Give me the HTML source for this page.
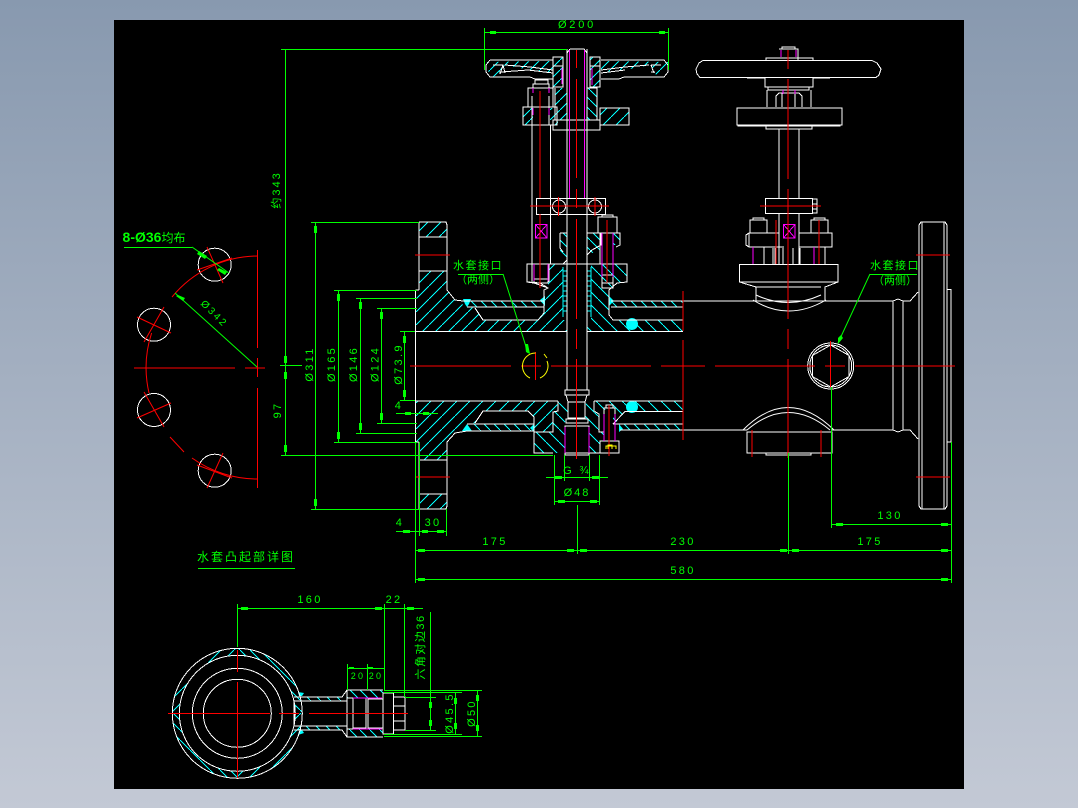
<!DOCTYPE html>
<html><head><meta charset="utf-8"><title>CAD drawing</title>
<style>
html,body{margin:0;padding:0;width:1078px;height:808px;overflow:hidden;background:linear-gradient(#8899af,#c3c9d5)}
svg{position:absolute;left:0;top:0}
.b{fill:none;stroke:#fff;stroke-width:1}
.r{fill:none;stroke:#f00;stroke-width:1}
.g{fill:none;stroke:#0f0;stroke-width:1}
.m{fill:none;stroke:#f0f;stroke-width:1}
.y{fill:none;stroke:#ff0;stroke-width:1}
.c{fill:none;stroke:#0ff;stroke-width:1}
.gf{fill:#0f0}
.cf{fill:#0ff}
text{fill:#0f0;font-family:"Liberation Sans","Noto Sans CJK SC",sans-serif;font-size:11px;letter-spacing:2.3px;text-anchor:middle}
.z{font-size:11px;letter-spacing:1.5px}
</style></head><body>
<svg width="1078" height="808" viewBox="0 0 1078 808" xmlns="http://www.w3.org/2000/svg">
<defs>
<pattern id="h1" width="13" height="13" patternUnits="userSpaceOnUse"><path d="M0,0L13,13" stroke="#0ff" stroke-width="1" fill="none" shape-rendering="crispEdges"/></pattern>
<pattern id="h2" width="13" height="13" patternUnits="userSpaceOnUse"><path d="M0,13L13,0" stroke="#0ff" stroke-width="1" fill="none" shape-rendering="crispEdges"/></pattern>
<pattern id="h3" width="10" height="10" patternUnits="userSpaceOnUse"><path d="M0,10L10,0" stroke="#0ff" stroke-width="1" fill="none" shape-rendering="crispEdges"/></pattern>
<pattern id="h4" width="10" height="10" patternUnits="userSpaceOnUse"><path d="M0,0L10,10" stroke="#0ff" stroke-width="1" fill="none" shape-rendering="crispEdges"/></pattern>
<clipPath id="qa"><rect x="160" y="640" width="77" height="73"/><rect x="237" y="713" width="77" height="73"/></clipPath>
<clipPath id="qb"><rect x="237" y="640" width="77" height="73"/><rect x="160" y="713" width="77" height="73"/></clipPath>
</defs>
<rect x="114" y="20" width="850" height="769" fill="#000"/>

<!-- hatching -->
<g stroke="none">
<polygon fill="url(#h2)" points="419,222 447,222 447,237 419,237"/>
<polygon fill="url(#h2)" points="415.5,290 419,290 419,271 447,271 447,290 455,300 467,307 475,308 483,320 538,320 544,313 544,290 548,288 548,264 563,264 563,320 567,320 567,331.5 415.5,331.5"/>
<polygon fill="url(#h4)" points="467,301 544,301 544,307 467,307"/>
<polygon fill="url(#h1)" points="587,331.5 683,331.5 683,320 613,320 609,315 609,290 617,283 627,282 627,264 591,264 591,320 587,320"/>
<polygon fill="url(#h4)" points="611,301 683,301 683,307 611,307"/>
<polygon fill="url(#h2)" points="415.5,401 557,401 558,411 553,413 553,432 534,432 534,417 528,411 483,411 475,423 467,424 467,431 455,433 447,442 447,460 419,460 419,442 415.5,442"/>
<polygon fill="url(#h4)" points="467,424 534,424 534,431 467,431"/>
<polygon fill="url(#h2)" points="419,494 447,494 447,509 419,509"/>
<polygon fill="url(#h1)" points="534,432 553,432 553,413 558,411 558,401 568,401 568,420 565,422 565,453 534,453"/>
<polygon fill="url(#h1)" points="586,401 594,401 594,412 599,414 599,432 604,432 604,441 600,443 600,453 589,453 589,424 585,419"/>
<polygon fill="url(#h1)" points="594,401 683,401 683,412 625,412 619,420 613,424 613,410 594,410"/>
<polygon fill="url(#h4)" points="620,424 683,424 683,430 620,430"/>
<polygon fill="url(#h2)" points="600,108 629,108 629,125 600,125"/>
<polygon fill="url(#h3)" points="487,62 553,61 553,73 530,70 505,65 500,74 492,77 486,68"/>
<polygon fill="url(#h3)" points="601,61 668,62 668,68 662,77 655,74 650,65 625,70 601,73"/>
<polygon fill="url(#h3)" points="553,57 563,57 563,87 553,87"/>
<polygon fill="url(#h3)" points="590,57 600,57 600,87 590,87"/>
<polygon fill="url(#h3)" points="555,88 567,88 567,120 555,120"/>
<polygon fill="url(#h4)" points="587,88 597,88 597,120 587,120"/>
<polygon fill="url(#h3)" points="523,108 533,108 533,125 523,125"/>
<polygon fill="url(#h3)" points="550,108 558,108 558,125 550,125"/>
<polygon fill="url(#h4)" points="560,233 567,233 567,260 560,260"/>
<polygon fill="url(#h4)" points="587,233 600,233 600,250 587,255"/>
<polygon fill="url(#h4)" points="613,233 620,233 620,245 613,245"/>
<path clip-path="url(#qa)" fill="url(#h2)" fill-rule="evenodd" d="M172.3,713.3a65,65 0 1,0 130,0a65,65 0 1,0 -130,0zM179.3,713.3a58,58 0 1,1 116,0a58,58 0 1,1 -116,0z"/>
<path clip-path="url(#qb)" fill="url(#h4)" fill-rule="evenodd" d="M172.3,713.3a65,65 0 1,0 130,0a65,65 0 1,0 -130,0zM179.3,713.3a58,58 0 1,1 116,0a58,58 0 1,1 -116,0z"/>
<polygon fill="url(#h4)" points="298,697 342,697 342,701 298,701"/>
<polygon fill="url(#h4)" points="298,726 342,726 342,730 298,730"/>
<polygon fill="url(#h4)" points="347,690 383,690 383,698 347,698"/>
<polygon fill="url(#h4)" points="347,729 383,729 383,737 347,737"/>
</g>
<g class="c" shape-rendering="crispEdges">
<path d="M563,267V317M567,267V317M563,271H567M563,276H567M563,281H567M563,286H567M563,291H567M563,296H567M563,301H567M563,306H567M563,311H567M587,267V317M591,267V317M587,271H591M587,276H591M587,281H591M587,286H591M587,291H591M587,296H591M587,301H591M587,306H591M587,311H591"/>
</g>
<g class="cf">
<polygon points="463,299 471,299 469,304 467,307 465,304"/>
<polygon points="540,300 545,296 545,306"/>
<polygon points="609,296 614,301 609,306"/>
<circle cx="632" cy="324" r="6"/><circle cx="632" cy="407" r="6"/>
<polygon points="467,424 472,431 462,431"/>
<polygon points="530,428 534,424 534,432"/>
<polygon points="619,424 623,429 619,432"/>
<polygon points="298,692 304,693 302,696 299,696"/>
<polygon points="298,735 304,733 302,730 299,731"/>
</g>

<!-- white geometry -->
<g class="b" shape-rendering="crispEdges">
<!-- left flange -->
<path d="M415.5,290V442M415.5,290H419M415.5,442H419M419,222V290M419,442V509M419,222H446L447,225V290L455,300L463,301M419,509H446L447,506V442L455,433L467,431"/>
<path d="M419,237H447M419,271H447M419,460H447M419,494H447"/>
<path d="M415.5,331.5H567M587,331.5H683M415.5,401H558M594,401H683"/>
<path d="M463,301H544M467,307H544M475,308L483,320H538L544,313V290L548,288L540,283L527,282V264H627V282L617,283L609,290V315L613,320H683M611,301H893M611,307H683"/>
<path d="M475,423L483,411H528L534,417V453H553M467,424H534M467,431H534M534,432H553V412L558,411V401M625,411.5H683L625,411.5L613,424M613,424H683M620,430H747M832,430H893"/>
<path d="M594,401V411L599,414V432H604M600,453H589M565,453H589"/>
<!-- stem -->
<path d="M567,49V390M587,49V390M570,49H584L587,53M570,49L567,53"/>
<path d="M565,390H589V395H565ZM566,395L568,402H585L587,395M568,402V418H585V402M566,419H588V423H566ZM565,426H589V455H565Z"/>
<!-- bolt low -->
<path d="M604,408H615V441H604ZM606,408V405H613V408M600,441H619V453H600Z"/>
<!-- left handwheel -->
<path d="M490,60H553M490,60L486,65V72L490,77H530L535,79H553M493,65H503L505,73M503,65L500,74M499,72H501M501,72L528,70L553,73M505,65L530,67L553,70M601,60H664L668,65V72L664,77H624L619,79H601M651,65H661M651,65L654,73M651,72H655M625,70L601,73M649,65L625,67L601,70"/>
<path d="M553,57H563V87H553ZM553,66H563M590,57H600V87H590ZM590,66H600"/>
<path d="M555,88V120H567M587,88H597V120H587M597,88V88"/>
<!-- left bolt upper -->
<path d="M528,88H553V107H528ZM533,88V84H549V88M535,84V80H548V84M523,107H557V125H523ZM532,107V125M549,107V125M532,96V107M549,96V107"/>
<path d="M553,120H600V130H553ZM600,108H629V125H600Z"/>
<!-- yoke -->
<path d="M532,125V264M550.5,125V264"/>
<rect x="536.5" y="198.5" width="69" height="16"/>
<circle cx="559" cy="206.5" r="6.5"/><circle cx="595" cy="206.5" r="6.5"/>
<path d="M560,233H567V260L563,264M560,233V248L563,252M587,233H601V245L592,250L587,255"/>
<path d="M598,217H617V233H598ZM602,217V215H613V217M600,233V264M613,233H620V245L616,247M613,233V264"/>
<path d="M527,282L534,283L548,288"/>
<path d="M532,264V282M549,264V282"/>
<path d="M534,279H548V283H534ZM602,275H613V283H602ZM602,283V288H613V283"/>

<!-- right body -->
<path d="M683,301H753M826,301H893M683,430H747"/>
<path d="M739.5,264.5H838V282H739.5ZM739.5,282L756,287V301H825V287L838,282"/>
<path d="M756,287H821"/>
<path d="M893,301V430M903,301V430M893,301L898,299L903,301L910,301L918,292M893,430L898,432L903,430H910L918,439"/>
<path d="M919,225L921,222H945L947,225V506L945,509H921L919,506ZM922,222V509M944,222V509M947,289.5H951V442H947"/>
<path d="M747,432H832V453H747ZM766,453V455H811V453"/>
<path d="M779,213V264M799,213V264M775,248V264M783,248V264M793,248V264M800,248V264"/>
<path d="M773,248V264M784,247H779M799,247H805M749,233H779V247H749ZM799,233H832V247H799ZM749,233L746,235V245L749,247M832,233L831,233"/>
<path d="M750,220H767V233H750ZM753,220V218H764V220M811,220H828V233H811ZM814,220V218H825V220M753,247V264M764,247V264M814,247V264M825,247V264"/>
<!-- right top -->
<path d="M703,60.5H872L877,63L881,69L879,75L876,77.5H700L697,74L696,69L699,63ZM779,49H798V60M782,49V47H795V49M766,60V58H813V60"/>
<path d="M747,78H765M813,78H830M765,78V87H813V78M768,87V90H809V87M767,90V107M811,90V107M776,107V96L779,93H799L802,96V107M782,93V107M795,93V107M737,108H842V125H737ZM738,125H840V126H738ZM766,126V129H812V126M779,129V198M799,129V198"/>
<rect x="765.5" y="198.5" width="47" height="15"/>
<path d="M788,198V213M812,199H817V213H812M812,204H817M812,209H817"/>
<!-- hex port -->
<circle cx="830.7" cy="366" r="23"/><circle cx="830.7" cy="366" r="21"/>
<polygon points="830.7,345 849,355.5 849,376.5 830.7,387 812.4,376.5 812.4,355.5"/>
<!-- bottom-left view -->
<circle cx="237.3" cy="713.3" r="65"/><circle cx="237.3" cy="713.3" r="58"/><circle cx="237.3" cy="713.3" r="45"/><circle cx="237.3" cy="713.3" r="34"/>
<path d="M294,697H342L347,690H383M294,701H347M294,726H347M294,730H342L347,737H383M347,690V737"/>
<path d="M294,701V726"/>
<path d="M347,698H353V729H347M353,698H366V728H353ZM368,699H383V728H368ZM383,693H393.5V734H383ZM393,697H405V730H393M393,706H405M393,721H405M405,697V730"/>
</g>
<g fill="none" stroke="#fff" stroke-width="1">
<path d="M753,300Q788,322 826,300M756,295Q788,310 821,295"/>
<path d="M743,430Q788,385 834,430M747,430Q788,395 830,430"/>
</g>
<g fill="none" stroke="#fff" shape-rendering="crispEdges"><circle cx="214.7" cy="264.7" r="16.5"/><circle cx="154" cy="324.7" r="16.5"/><circle cx="154" cy="410" r="16.5"/><circle cx="214.7" cy="470.7" r="16.5"/></g>

<!-- magenta -->
<g class="m" shape-rendering="crispEdges">
<path d="M569.5,50V198M584.5,50V198"/>
<path d="M562,68V84M592,68V85M533,88V93M549,88V93M533,108V115M549,108V115"/>
<path d="M535.5,224.5H547V238H535.5ZM535.5,224.5L547,238M547,224.5L535.5,238"/>
<path d="M783.5,224.5H795V238H783.5ZM783.5,224.5L795,238M795,224.5L783.5,238"/>
<path d="M602,233V277M613,233V277M534,264V281M548,264V281"/>
<path d="M565,427V453M589,427V453M604,414V441M615,414V441"/>
<path d="M781,50V57M796,50V57M783,90V94M795,90V94"/>
<path d="M753,247V264M814,247V264"/>
<path d="M353,698H382M353,729H382"/>
</g>

<!-- red centre lines -->
<g class="r" shape-rendering="crispEdges">
<path d="M410,366H511M521,366H541M551,366H651M661,366H681M680,366H705M715,366H815M825,366H845M855,366H955"/>
<path d="M576.7,50V68M576.7,79V178M576.7,189V208M576.7,219V319M576.7,329V349M576.7,359V459"/>
<path d="M788,50V69M788,79V179M788,189V319M788,329V349M788,359V458"/>
<path d="M683,291V331M683,340V440"/>
<path d="M535.5,352V380M830.7,341V387"/>
<path d="M415,255H450M415,477H450"/>
<path d="M540,91V198M540,214V288"/>
<path d="M607,220V283M609,405V456"/>
<path d="M752,430V457M821,430V457"/>
<path d="M530,206H609M558.7,197V216M595,197V216"/>
<path d="M760,206H821"/>
<path d="M776,220V264M819,220V264"/>
<path d="M916,255H950M916,477H950"/>
<path d="M134,368H235M245,368H265M257.3,250V348M257.3,358V377M257.3,388V488"/>
<path d="M168,713.3H270M279,713.3H299M309,713.3H408M237.3,650V672M237.3,682V778"/>
</g>
<g class="r">
<path d="M257.3,256A112,112 0 0 0 172,297M151.6,333A112,112 0 0 0 149,393M170,437L184,452M192,458A112,112 0 0 0 257.3,479"/>
<path d="M207,247L223,283M197,270L232,258M164,307L144,342M137,317L171,333M137,418L171,403M164,427L144,392M207,488L223,453M197,465L232,478"/>
</g>

<!-- yellow -->
<g class="y">
<path d="M535.5,353A13,13 0 0 0 522.5,366M522.5,366A13,13 0 0 0 530,378M540,378A13,13 0 0 0 547,361M544,354L547,358"/>
<path d="M606,449V446H616V449M608,449V445H612V449M612,449V445"/>
</g>

<!-- green dimensions -->
<g class="g" shape-rendering="crispEdges">
<path d="M484.5,28V70M668.5,28V70M484,32.5H668"/>
<path d="M281,49.5H567M285.5,49V455M280,365.5H302M281,455.5H553"/>
<path d="M311,222.5H419M311,509.5H419M315.5,222V509"/>
<path d="M334,290.5H417M334,442.5H417M338.5,290V442"/>
<path d="M356,298.5H417M356,433.5H417M360.5,298V433"/>
<path d="M377,308.5H417M377,423.5H417M381.5,308V423"/>
<path d="M400,331.5H415M400,400.5H415M404.5,332V400"/>
<path d="M396,413.5H438"/>
<path d="M415.5,442V583M419.5,442V536M446.5,509V536M396,531.5H447"/>
<path d="M415,550.5H951M415,579.5H951M951.5,442V583M577.5,505V554M788.5,453V554M831.5,387V528M831,524.5H951"/>
<path d="M554.5,455V505M599.5,455V505M564.5,455V481M589.5,455V481M546,477.5H608M554,501.5H600"/>
<path d="M458,274.5H503M870,274.5H917"/>
<path d="M124,247.5H192"/>
<path d="M198,568.5H295"/>
<path d="M237.5,604V647M384.5,604V690M404.5,604V697M237,608.5H423M347.5,664V690M367.5,664V690M384,668.5H348"/>
<path d="M430.5,612V730M405,697.5H436M405,730.5H436M455.5,692V734M477.5,690V736M384,690.5H482M384,692.5H462M384,734.5H462M384,736.5H482"/>
</g>
<g class="g">
<path d="M503,274L528,353"/>
<path d="M870,274L838,343"/>
<path d="M192,247L229,273"/>
<path d="M175,293L257,367"/>
</g>
<g class="gf">
<!-- arrows -->
<rect x="490" y="31" width="6" height="3"/><rect x="659" y="31" width="6" height="3"/>
<rect x="284" y="356" width="3" height="7"/><rect x="284" y="372" width="3" height="7"/><rect x="284" y="445" width="3" height="7"/>
<rect x="314" y="226" width="3" height="7"/><rect x="314" y="499" width="3" height="7"/>
<rect x="337" y="294" width="3" height="7"/><rect x="337" y="432" width="3" height="7"/>
<rect x="359" y="302" width="3" height="7"/><rect x="359" y="423" width="3" height="7"/>
<rect x="380" y="312" width="3" height="7"/><rect x="380" y="413" width="3" height="7"/>
<rect x="403" y="336" width="3" height="7"/><rect x="403" y="390" width="3" height="7"/>
<rect x="405" y="412" width="6" height="3"/><rect x="423" y="412" width="6" height="3"/>
<rect x="403" y="530" width="7" height="3"/><rect x="422" y="530" width="6" height="3"/><rect x="437" y="530" width="7" height="3"/>
<rect x="418" y="549" width="7" height="3"/><rect x="567" y="549" width="7" height="3"/><rect x="580" y="549" width="7" height="3"/><rect x="780" y="549" width="7" height="3"/><rect x="792" y="549" width="7" height="3"/><rect x="941" y="549" width="7" height="3"/>
<rect x="418" y="578" width="7" height="3"/><rect x="941" y="578" width="7" height="3"/>
<rect x="836" y="523" width="7" height="3"/><rect x="941" y="523" width="7" height="3"/>
<rect x="555" y="476" width="7" height="3"/><rect x="592" y="476" width="7" height="3"/>
<rect x="558" y="500" width="7" height="3"/><rect x="590" y="500" width="7" height="3"/>
<polygon points="525,344 528,344 530,354 526,352"/>
<polygon points="841,335 843,338 838,344 838,338"/>
<polygon points="199,251 207,256 205,259 197,254"/>
<polygon points="219,268 227,272 225,275 217,270"/>
<polygon points="178,295 185,298 183,301 176,296"/>
<rect x="241" y="607" width="7" height="3"/><rect x="375" y="607" width="7" height="3"/><rect x="407" y="607" width="7" height="3"/>
<rect x="349" y="667" width="5" height="2"/><rect x="368" y="667" width="5" height="2"/>
<rect x="429" y="702" width="3" height="6"/><rect x="429" y="720" width="3" height="6"/>
<rect x="454" y="698" width="3" height="6"/><rect x="454" y="723" width="3" height="6"/>
<rect x="476" y="695" width="3" height="6"/><rect x="476" y="725" width="3" height="6"/>
</g>

<!-- text -->
<text x="577" y="28" style="letter-spacing:2.8px">Ø200</text>
<text transform="translate(280,190) rotate(-90)" class="z" style="letter-spacing:2px">约343</text>
<text transform="translate(281,410) rotate(-90)">97</text>
<text transform="translate(313,364) rotate(-90)">Ø311</text>
<text transform="translate(335,364) rotate(-90)">Ø165</text>
<text transform="translate(357,364) rotate(-90)">Ø146</text>
<text transform="translate(378.5,364) rotate(-90)">Ø124</text>
<text transform="translate(402,364) rotate(-90)">Ø73.9</text>
<text x="399" y="409">4</text>
<text x="400" y="526">4</text>
<text x="433" y="526">30</text>
<text x="495" y="545">175</text>
<text x="683" y="545">230</text>
<text x="870" y="545">175</text>
<text x="890" y="519">130</text>
<text x="683" y="574">580</text>
<text x="577" y="474">G ¾</text>
<text x="577" y="496" style="letter-spacing:2px">Ø48</text>
<text x="154" y="242" style="font-size:14px;letter-spacing:0;font-weight:bold">8-Ø36<tspan style="font-weight:normal;font-size:12px">均布</tspan></text>
<text transform="translate(212,316) rotate(45)" style="font-size:10px">Ø342</text>
<text x="478" y="269" class="z">水套接口</text>
<text x="478" y="283" class="z" style="letter-spacing:0">（两侧）</text>
<text x="895" y="269" class="z">水套接口</text>
<text x="895" y="284" class="z" style="letter-spacing:0">（两侧）</text>
<text x="246" y="561" style="font-size:12px;letter-spacing:2px">水套凸起部详图</text>
<text x="310" y="603">160</text>
<text x="394" y="603">22</text>
<text x="358" y="679" style="font-size:9px">20</text>
<text x="376" y="679" style="font-size:9px">20</text>
<text transform="translate(424,647) rotate(-90)" class="z">六角对边36</text>
<text transform="translate(453,713) rotate(-90)">Ø45.5</text>
<text transform="translate(475,713) rotate(-90)">Ø50</text>
</svg>
</body></html>
